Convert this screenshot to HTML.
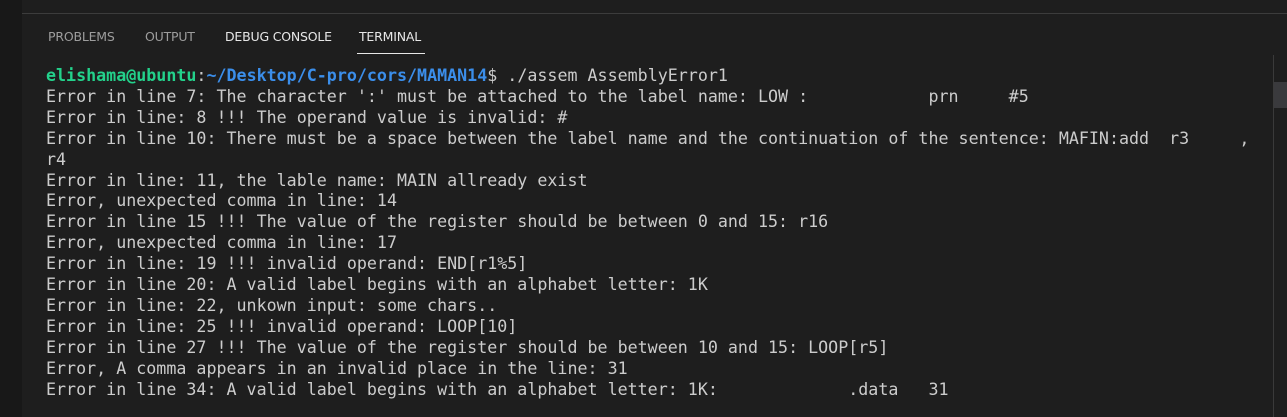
<!DOCTYPE html>
<html><head><meta charset="utf-8"><style>
html,body{margin:0;padding:0;width:1287px;height:417px;background:#1e1e1e;overflow:hidden;position:relative}
.left{position:absolute;left:0;top:0;width:22px;height:417px;background:#181818}
.topbar{position:absolute;left:22px;top:0;right:0;height:13px;background:#1e1e1e;border-bottom:1px solid #3c3c3c}
.tabs{position:absolute;top:29px;left:48px;font:12.5px "DejaVu Sans","Liberation Sans",sans-serif;color:#9d9d9d;letter-spacing:-0.2px}
.tabs span{position:absolute;white-space:nowrap}
.ul{position:absolute;left:357px;top:53px;width:68px;height:1px;background:#e7e7e7}
pre{position:absolute;left:46px;top:66px;margin:0;font:16.67px/20.9px "DejaVu Sans Mono","Liberation Mono",monospace;color:#cccccc;white-space:pre}
.g{color:#23d18b;font-weight:bold}.b{color:#3b8eea;font-weight:bold}
.sl{position:absolute;left:1273px;top:55px;width:1px;height:362px;background:#3a3a3a}
.th{position:absolute;left:1274px;top:82px;width:13px;height:26px;background:#3a3a3d}
</style></head><body>
<div class="left"></div><div class="topbar"></div>
<div class="tabs"><span style="left:0">PROBLEMS</span><span style="left:97px">OUTPUT</span><span style="left:177px;color:#e7e7e7">DEBUG CONSOLE</span><span style="left:311px;color:#e7e7e7">TERMINAL</span></div>
<div class="ul"></div>
<pre><span class="g">elishama@ubuntu</span>:<span class="b">~/Desktop/C-pro/cors/MAMAN14</span>$ ./assem AssemblyError1
Error in line 7: The character ':' must be attached to the label name: LOW :            prn     #5
Error in line: 8 !!! The operand value is invalid: #
Error in line 10: There must be a space between the label name and the continuation of the sentence: MAFIN:add  r3     ,
r4
Error in line: 11, the lable name: MAIN allready exist
Error, unexpected comma in line: 14
Error in line 15 !!! The value of the register should be between 0 and 15: r16
Error, unexpected comma in line: 17
Error in line: 19 !!! invalid operand: END[r1%5]
Error in line 20: A valid label begins with an alphabet letter: 1K
Error in line: 22, unkown input: some chars..
Error in line: 25 !!! invalid operand: LOOP[10]
Error in line 27 !!! The value of the register should be between 10 and 15: LOOP[r5]
Error, A comma appears in an invalid place in the line: 31
Error in line 34: A valid label begins with an alphabet letter: 1K:             .data   31</pre>
<div class="sl"></div><div class="th"></div>
</body></html>
